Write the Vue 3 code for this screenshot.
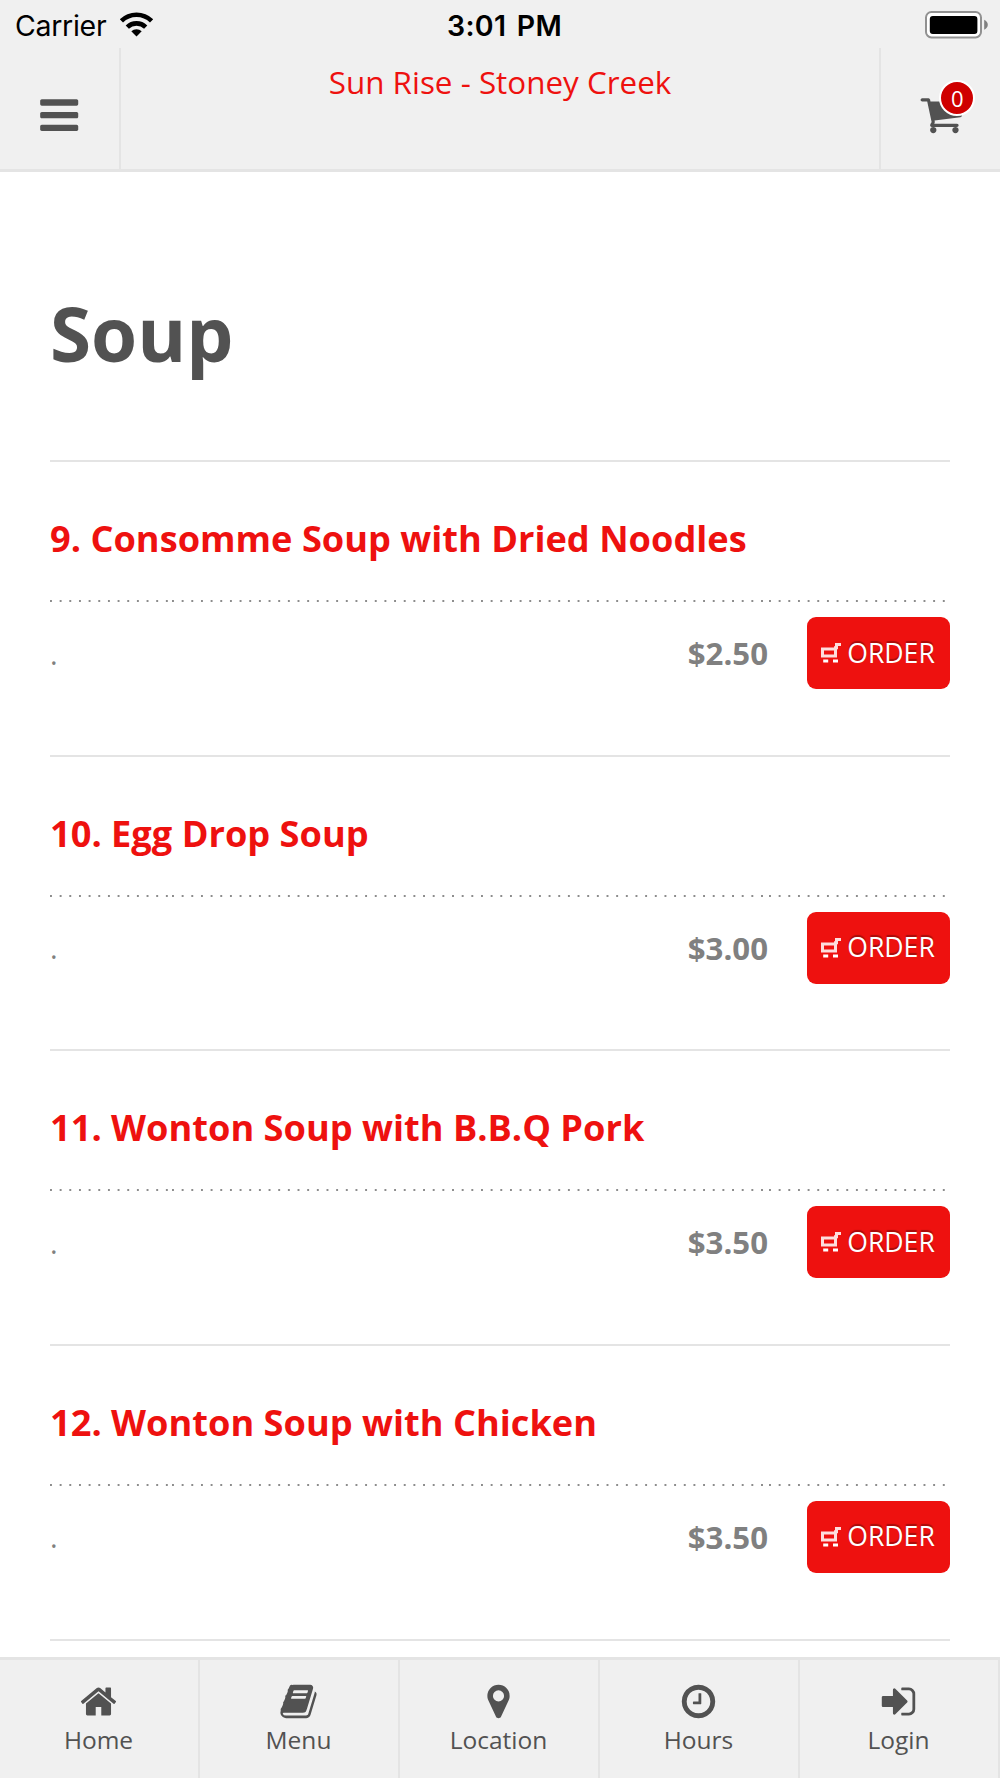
<template>
  <div class="app">
    <div class="status-bar">
      <div class="carrier">
        <span>Carrier</span>
        <svg class="wifi" width="35" height="25" viewBox="0 0 35 25">
          <path
            d="M2.4 8.9a21.6 21.6 0 0 1 30.2 0M8.3 15.1a13.2 13.2 0 0 1 18.4 0"
            fill="none"
            stroke="#000"
            stroke-width="4.6"
          />
          <path d="M17.5 24.6l-5.2-5.3a7.4 7.4 0 0 1 10.4 0z" />
        </svg>
      </div>
      <span class="clock">3:01 PM</span>
      <div class="battery">
        <svg width="64" height="28" viewBox="0 0 64 28">
          <rect
            x="1"
            y="1"
            width="55"
            height="25.4"
            rx="5.5"
            fill="#fff"
            stroke="#919191"
            stroke-width="2"
          />
          <rect x="4.8" y="5" width="47.6" height="18" rx="3" />
          <path d="M59.2 8.8q3.6 2 3.6 5t-3.6 5z" fill="#808080" />
        </svg>
      </div>
    </div>

    <header class="header">
      <button class="header-btn menu-btn">
        <svg width="44.4" height="44.4" viewBox="0 0 1792 1792">
          <path :d="icons.bars" />
        </svg>
      </button>
      <div class="shop-name">Sun Rise - Stoney Creek</div>
      <button class="header-btn cart-btn">
        <span class="cart">
          <svg width="44.4" height="44.4" viewBox="0 0 1792 1792">
            <path :d="icons.cart" />
          </svg>
          <span class="badge">{{ cartCount }}</span>
        </span>
      </button>
    </header>

    <main class="content">
      <h1 class="category">Soup</h1>
      <ul class="items">
        <li v-for="item in items" :key="item.name" class="item">
          <h2 class="name">{{ item.name }}</h2>
          <div class="dots"><i></i><i></i><i></i></div>
          <div class="item-row">
            <span class="description">.</span>
            <span class="price">{{ formatPrice(item.price) }}</span>
            <button class="order-btn" @click="cartCount++">
              <svg width="20" height="20" viewBox="0 0 20 20">
                <path
                  d="M14 1.5h6M15.5 1.5v3.2h-1v8.3H1.5V6h12"
                  fill="none"
                  stroke="#fff"
                  stroke-opacity="0.86"
                  stroke-width="3"
                />
                <path d="M2.2 16.6h5v2.8h-5zM12 16.6h5v2.8h-5z" fill="#fff" />
              </svg>
              <span>ORDER</span>
            </button>
          </div>
        </li>
      </ul>
    </main>

    <nav class="tabs">
      <a v-for="tab in tabs" :key="tab.label" class="tab">
        <svg width="39" height="39" viewBox="0 0 1792 1792">
          <path :d="icons[tab.icon]" />
        </svg>
        <span>{{ tab.label }}</span>
      </a>
    </nav>
  </div>
</template>

<script setup>
import { ref } from "vue";

const cartCount = ref(0);

const items = [
  { name: "9. Consomme Soup with Dried Noodles", price: 2.5 },
  { name: "10. Egg Drop Soup", price: 3 },
  { name: "11. Wonton Soup with B.B.Q Pork", price: 3.5 },
  { name: "12. Wonton Soup with Chicken", price: 3.5 },
];

const tabs = [
  { label: "Home", icon: "home" },
  { label: "Menu", icon: "book" },
  { label: "Location", icon: "marker" },
  { label: "Hours", icon: "clock" },
  { label: "Login", icon: "signIn" },
];

const formatPrice = (price) => `$${price.toFixed(2)}`;

const icons = {
  bars: "M1664 1344v128q0 26-19 45t-45 19h-1408q-26 0-45-19t-19-45v-128q0-26 19-45t45-19h1408q26 0 45 19t19 45zm0-512v128q0 26-19 45t-45 19h-1408q-26 0-45-19t-19-45v-128q0-26 19-45t45-19h1408q26 0 45 19t19 45zm0-512v128q0 26-19 45t-45 19h-1408q-26 0-45-19t-19-45v-128q0-26 19-45t45-19h1408q26 0 45 19t19 45z",
  cart: "M704 1536q0 52-38 90t-90 38-90-38-38-90 38-90 90-38 90 38 38 90zm896 0q0 52-38 90t-90 38-90-38-38-90 38-90 90-38 90 38 38 90zm128-1088v512q0 24-16.5 42.5t-40.5 21.5l-1044 122q13 60 13 70 0 16-24 64h920q26 0 45 19t19 45-19 45-45 19h-1024q-26 0-45-19t-19-45q0-11 8-31.5t16-36 21.5-40 15.5-29.5l-177-823h-204q-26 0-45-19t-19-45 19-45 45-19h256q16 0 28.5 6.5t19.5 15.5 13 24.5 8 26 5.5 29.5 4.5 26h1201q26 0 45 19t19 45z",
  home: "M1472 992v480q0 26-19 45t-45 19h-384v-384h-256v384h-384q-26 0-45-19t-19-45v-480q0-1 .5-3t.5-3l575-474 575 474q1 2 1 6zm223-69l-62 74q-8 9-21 11h-3q-13 0-21-7l-692-577-692 577q-12 8-24 7-13-2-21-11l-62-74q-8-10-7-23.5t11-21.5l719-599q32-26 76-26t76 26l244 204v-195q0-14 9-23t23-9h192q14 0 23 9t9 23v408l219 182q10 8 11 21.5t-7 23.5z",
  book: "M1703 478q40 57 18 129l-275 906q-19 64-76.5 107.5t-122.5 43.5h-923q-77 0-148.5-53.5t-99.5-131.5q-24-67-2-127 0-4 3-27t4-37q1-8-3-21.5t-3-19.5q2-11 8-21t16.5-23.5 16.5-23.5q23-38 45-91.5t30-91.5q3-10 .5-30t-.5-28q3-11 17-28t17-23q21-36 42-92t25-90q1-9-2.5-32t.5-28q4-13 22-30.5t22-22.5q19-26 42.5-84.5t27.5-96.5q1-8-3-25.5t-2-26.5q2-8 9-18t18-23 17-21q8-12 16.5-30.5t15-35 16-36 19.5-32 26.5-23.5 36-11.5 47.5 5.5l-1 3q38-9 51-9h761q74 0 114 56t18 130l-274 906q-36 119-71.5 153.5t-128.5 34.5h-869q-27 0-38 15-11 16-1 43 24 70 144 70h923q29 0 56-15.5t35-41.5l300-987q7-22 5-57 38 15 59 43zm-1064 2q-4 13 2 22.5t20 9.5h608q13 0 25.5-9.5t16.5-22.5l21-64q4-13-2-22.5t-20-9.5h-608q-13 0-25.5 9.5t-16.5 22.5zm-83 256q-4 13 2 22.5t20 9.5h608q13 0 25.5-9.5t16.5-22.5l21-64q4-13-2-22.5t-20-9.5h-608q-13 0-25.5 9.5t-16.5 22.5z",
  marker:
    "M1152 640q0-106-75-181t-181-75-181 75-75 181 75 181 181 75 181-75 75-181zm256 0q0 109-33 179l-364 774q-16 33-47.5 52t-67.5 19-67.5-19-46.5-52l-365-774q-33-70-33-179 0-212 150-362t362-150 362 150 150 362z",
  clock:
    "M1024 544v448q0 14-9 23t-23 9h-320q-14 0-23-9t-9-23v-64q0-14 9-23t23-9h224v-352q0-14 9-23t23-9h64q14 0 23 9t9 23zm416 352q0-148-73-273t-198-198-273-73-273 73-198 198-73 273 73 273 198 198 273 73 273-73 198-198 73-273zm224 0q0 209-103 385.5t-279.5 279.5-385.5 103-385.5-103-279.5-279.5-103-385.5 103-385.5 279.5-279.5 385.5-103 385.5 103 279.5 279.5 103 385.5z",
  signIn:
    "M1312 896q0 26-19 45l-544 544q-19 19-45 19t-45-19-19-45v-288h-448q-26 0-45-19t-19-45v-384q0-26 19-45t45-19h448v-288q0-26 19-45t45-19 45 19l544 544q19 19 19 45zm352-352v704q0 119-84.5 203.5t-203.5 84.5h-320q-13 0-22.5-9.5t-9.5-22.5q0-4-1-20t-.5-26.5 3-23.5 10-19.5 20.5-6.5h320q66 0 113-47t47-113v-704q0-66-47-113t-113-47h-312l-11.5-1-11.5-3-8-5.5-7-9-2-13.5q0-4-1-20t-.5-26.5 3-23.5 10-19.5 20.5-6.5h320q119 0 203.5 84.5t84.5 203.5z",
};
</script>

<style>
body {
  margin: 0;
  background: #fff;
}
</style>

<style scoped>
.app {
  display: flex;
  flex-direction: column;
  height: 1778px;
  overflow: hidden;
  font-family: "Open Sans", sans-serif;
  color: #525252;
}

.app * {
  box-sizing: border-box;
}

svg {
  display: block;
  flex-shrink: 0;
}

button {
  border: none;
  background: none;
  padding: 0;
  font-family: inherit;
  cursor: pointer;
}

/* Status bar */
.status-bar {
  display: grid;
  grid-template-columns: 1fr auto 1fr;
  flex-shrink: 0;
  height: 48px;
  padding: 0 11px 0 15px;
  background: #f0f0f0;
  font-family: Inter, sans-serif;
  font-size: 28.5px;
  line-height: 51px;
  color: #000;
}

.carrier {
  display: flex;
  gap: 13px;
  letter-spacing: -0.3px;
}

.wifi {
  margin-top: 12px;
}

.clock {
  font-size: 28.5px;
  font-weight: 600;
  letter-spacing: 0.3px;
  word-spacing: 3px;
  padding-left: 5px;
}

.battery {
  justify-self: end;
  padding-top: 11px;
}

/* Header */
.header {
  display: flex;
  flex-shrink: 0;
  height: 124px;
  background: #f0f0f0;
  border-bottom: 3px solid #e4e4e4;
}

.header-btn {
  display: flex;
  justify-content: center;
  padding-top: 45px;
  width: 121px;
}

.header svg,
.tabs svg {
  fill: #525252;
}

.menu-btn {
  border-right: 2px solid #e4e4e4;
}

.cart-btn {
  border-left: 2px solid #e4e4e4;
  padding-top: 44px;
  padding-left: 2px;
}

.shop-name {
  flex: 1;
  padding-top: 11px;
  font-size: 31.4px;
  line-height: 46px;
  text-align: center;
  color: #ee110f;
}

.cart {
  position: relative;
}

.badge {
  position: absolute;
  top: -12px;
  left: 20px;
  width: 36px;
  height: 36px;
  border: 2px solid #fff;
  border-radius: 50%;
  background: #cf0000;
  font-size: 22px;
  line-height: 33px;
  text-align: center;
  color: #fff;
}

/* Menu items */
.content {
  flex: 1;
  min-height: 0;
  overflow: hidden;
  padding: 110px 50px 0;
}

.category {
  margin: 0;
  height: 178px;
  font-size: 74.6px;
  line-height: 102px;
  font-weight: 700;
}

.items {
  margin: 0;
  padding: 0;
  list-style: none;
  border-bottom: 2px solid #e4e4e4;
}

.item {
  height: 294.67px;
  border-top: 2px solid #e4e4e4;
  padding-top: 52px;
}

.name {
  margin: 0;
  height: 86px;
  font-size: 36.2px;
  line-height: 49px;
  font-weight: 700;
  white-space: nowrap;
  color: #ee110f;
}

.dots {
  display: flex;
  height: 2px;
}

.dots i {
  width: 122px;
  background: linear-gradient(90deg, #8c8c8c 2px, transparent 2.4px) 0 0 /
    9.67px 2px repeat-x;
}

.dots i:nth-child(2) {
  width: 597px;
}

.dots i:nth-child(3) {
  width: 181px;
}

.item-row {
  display: flex;
  align-items: center;
  height: 72px;
  margin-top: 15px;
}

.description {
  flex: 1;
  font-size: 29px;
  color: #808080;
}

.price {
  font-size: 31.2px;
  font-weight: 700;
  color: #808080;
}

.order-btn {
  display: flex;
  align-items: center;
  justify-content: center;
  gap: 6px;
  width: 143px;
  height: 72px;
  margin-left: 39px;
  padding-right: 1px;
  border-radius: 9px;
  background: #ee110f;
  font-size: 26.6px;
  color: #fff;
  text-shadow: 0 -2px 1px rgba(0, 0, 0, 0.3);
}

.order-btn span {
  margin-top: -1px;
}

/* Bottom tabs */
.tabs {
  display: flex;
  flex-shrink: 0;
  height: 121px;
  border-top: 3px solid #e4e4e4;
  background: #f0f0f0;
}

.tab {
  display: flex;
  flex: 1;
  flex-direction: column;
  align-items: center;
  padding-top: 22px;
  padding-right: 1px;
  border-right: 2px solid #e4e4e4;
  font-size: 24.5px;
  line-height: 34px;
}

.tab span {
  margin-top: 2px;
}
</style>
